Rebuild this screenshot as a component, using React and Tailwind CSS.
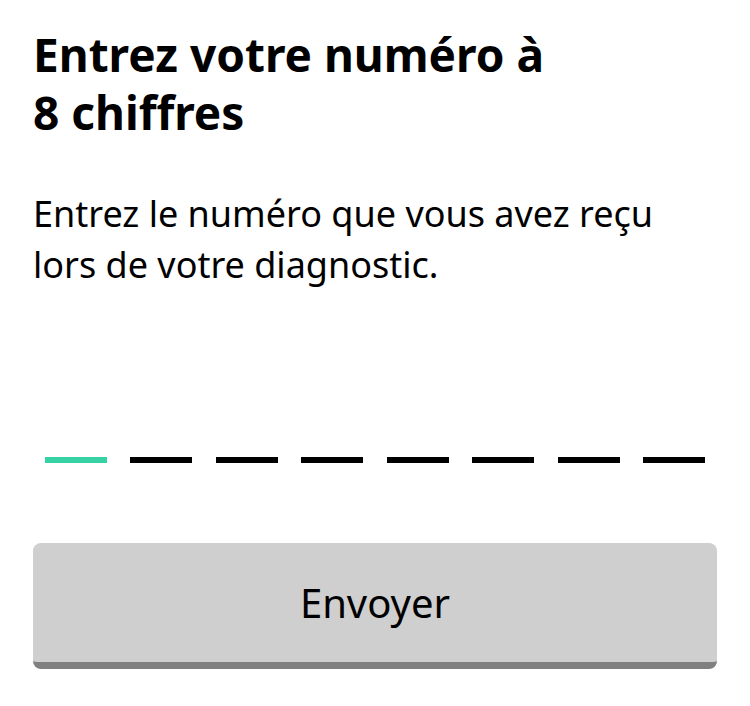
export default function App() {
  const digits = Array.from({ length: 8 });
  return (
    <div className="min-h-[706px] w-[750px] bg-white px-[33px] pt-[25px] font-['Noto_Sans',sans-serif] text-black">
      <h1 className="text-[46px] font-bold leading-[58px]">
        Entrez votre numéro à
        <br />
        8 chiffres
      </h1>
      <p className="mt-[47px] text-[36px] leading-[51px]">
        Entrez le numéro que vous avez reçu
        <br />
        lors de votre diagnostic.
      </p>
      <div className="mt-[167px] grid grid-cols-8">
        {digits.map((_, i) => (
          <div key={i} className="flex justify-center">
            <div className={`h-[6px] w-[62px] ${i === 0 ? "bg-[#36d1a4]" : "bg-black"}`} />
          </div>
        ))}
      </div>
      <button className="mt-[80px] flex h-[126px] w-full items-center justify-center rounded-[8px] border-b-[7px] border-[#808080] bg-[#cfcfcf] text-[40px]">
        Envoyer
      </button>
    </div>
  );
}
